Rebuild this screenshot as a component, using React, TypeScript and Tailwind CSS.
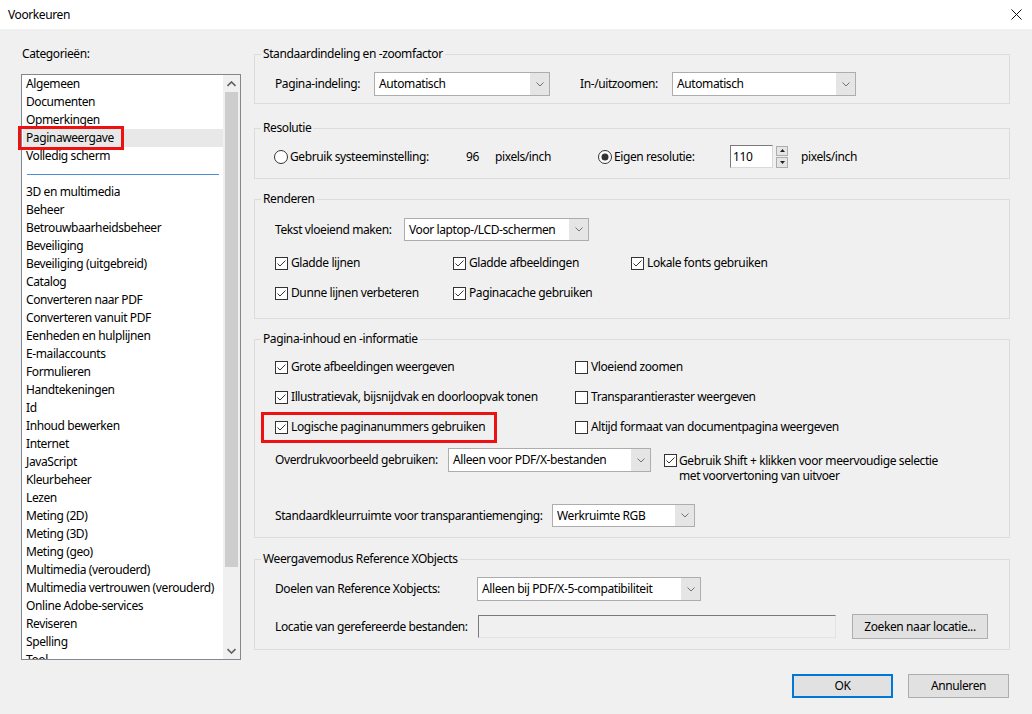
import React from 'react'

const FONT = { fontFamily: '"Noto Sans", "Liberation Sans", sans-serif' }

const categories = [
  'Algemeen',
  'Documenten',
  'Opmerkingen',
  'Paginaweergave',
  'Volledig scherm',
  '-',
  '3D en multimedia',
  'Beheer',
  'Betrouwbaarheidsbeheer',
  'Beveiliging',
  'Beveiliging (uitgebreid)',
  'Catalog',
  'Converteren naar PDF',
  'Converteren vanuit PDF',
  'Eenheden en hulplijnen',
  'E-mailaccounts',
  'Formulieren',
  'Handtekeningen',
  'Id',
  'Inhoud bewerken',
  'Internet',
  'JavaScript',
  'Kleurbeheer',
  'Lezen',
  'Meting (2D)',
  'Meting (3D)',
  'Meting (geo)',
  'Multimedia (verouderd)',
  'Multimedia vertrouwen (verouderd)',
  'Online Adobe-services',
  'Reviseren',
  'Spelling',
  'Tool',
]

const Chevron = () => (
  <svg width="8" height="5" viewBox="0 0 8 5">
    <path d="M0.5 0.5 L4 4 L7.5 0.5" fill="none" stroke="#707070" strokeWidth="1" />
  </svg>
)

const Select = ({ value, className }: { value: string; className: string }) => (
  <div className={`flex border border-[#adadad] bg-white ${className}`}>
    <div className="flex flex-1 items-center whitespace-nowrap pl-[4px]">{value}</div>
    <div className="flex w-[19px] items-center justify-center bg-[#e5e5e5]">
      <Chevron />
    </div>
  </div>
)

const Checkbox = ({ checked }: { checked: boolean }) => (
  <svg width="13" height="13" viewBox="0 0 13 13" className="shrink-0">
    <rect x="0.5" y="0.5" width="12" height="12" fill="#fff" stroke="#333" />
    {checked && <path d="M2.5 6.5 L5 9 L10.5 3.5" fill="none" stroke="#333" strokeWidth="1" />}
  </svg>
)

const Check = ({ label, checked, className = '' }: { label: string; checked: boolean; className?: string }) => (
  <div className={`flex h-[16px] items-center gap-[3px] ${className}`}>
    <Checkbox checked={checked} />
    <span className="whitespace-nowrap">{label}</span>
  </div>
)

const Radio = ({ checked }: { checked: boolean }) => (
  <svg width="14" height="14" viewBox="0 0 14 14" className="shrink-0">
    <circle cx="7" cy="7" r="6.5" fill="#fff" stroke="#333" />
    {checked && <circle cx="7" cy="7" r="3.5" fill="#333" />}
  </svg>
)

const Group = ({
  title,
  className,
  children,
}: {
  title: string
  className: string
  children: React.ReactNode
}) => (
  <fieldset className={`border border-[#dcdcdc] pl-[6px] pr-2 ${className}`}>
    <legend className="px-[2px] leading-[16px]">{title}</legend>
    <div className="pl-[14px]">{children}</div>
  </fieldset>
)

const Button = ({ label, primary, className = '' }: { label: string; primary?: boolean; className?: string }) => (
  <div
    className={`flex items-center justify-center whitespace-nowrap bg-[#e1e1e1] ${
      primary ? 'border-2 border-[#0078d7]' : 'border border-[#adadad]'
    } ${className}`}
  >
    {label}
  </div>
)

const App = () => {
  return (
    <div
      style={FONT}
      className="flex h-[714px] w-[1032px] flex-col bg-[#f0f0f0] text-[12px] leading-[16px] tracking-[-0.4px] text-black"
    >
      <div className="flex h-[29px] items-center justify-between bg-white pl-[8px] pr-[10px]">
        <span>Voorkeuren</span>
        <svg width="11" height="11" viewBox="0 0 11 11">
          <path d="M0.5 0.5 L10.5 10.5 M10.5 0.5 L0.5 10.5" stroke="#111" strokeWidth="1" />
        </svg>
      </div>

      <div className="flex">
        <div className="w-[241px] pl-[21px]">
          <div className="mt-[17px] mb-[12px] pl-[1px]">Categorieën:</div>
          <div className="flex h-[586px] w-[220px] border border-[#828790] bg-white">
            <div className="flex-1 overflow-y-clip pl-[1px]">
              {categories.map((c) =>
                c === '-' ? (
                  <div key="sep" className="flex h-[18px] items-center pl-[4px] pr-[4px]">
                    <div className="h-px w-full bg-[#4a90d9]" />
                  </div>
                ) : (
                  <div
                    key={c}
                    className={`h-[18px] whitespace-nowrap pl-[3px] leading-[18px] ${
                      c === 'Paginaweergave' ? 'bg-[#e8e8e8]' : ''
                    }`}
                  >
                    {c === 'Paginaweergave' ? (
                      <span className="relative inline-block h-[18px]">
                        {c}
                        <span className="absolute -top-[3px] -bottom-[3px] -left-[8px] -right-[10px] border-[3px] border-[#ee1111]" />
                      </span>
                    ) : (
                      c
                    )}
                  </div>
                ),
              )}
            </div>
            <div className="flex w-[17px] shrink-0 flex-col bg-[#f0f0f0]">
              <div className="flex h-[17px] items-center justify-center">
                <svg width="9" height="6" viewBox="0 0 9 6">
                  <path d="M0.5 5 L4.5 1 L8.5 5" fill="none" stroke="#606060" strokeWidth="1.6" />
                </svg>
              </div>
              <div className="flex-1 px-[2px]">
                <div className="h-[475px] bg-[#cdcdcd]" />
              </div>
              <div className="flex h-[17px] items-center justify-center">
                <svg width="9" height="6" viewBox="0 0 9 6">
                  <path d="M0.5 1 L4.5 5 L8.5 1" fill="none" stroke="#606060" strokeWidth="1.6" />
                </svg>
              </div>
            </div>
          </div>
        </div>

        <div className="ml-[13px] w-[756px]">
          <Group title="Standaardindeling en -zoomfactor" className="mt-[17px] pt-[10px] pb-[7px]">
            <div className="flex h-[24px] items-center whitespace-nowrap">
              <span className="w-[99px]">Pagina-indeling:</span>
              <Select value="Automatisch" className="h-[24px] w-[176px]" />
              <span className="ml-[30px] w-[92px]">In-/uitzoomen:</span>
              <Select value="Automatisch" className="h-[24px] w-[184px]" />
            </div>
          </Group>

          <Group title="Resolutie" className="mt-[16px] pt-[9px] pb-[10px]">
            <div className="-ml-[1px] flex h-[23px] items-center whitespace-nowrap">
              <div className="flex w-[192px] items-center gap-[2px]">
                <Radio checked={false} />
                <span>Gebruik systeeminstelling:</span>
              </div>
              <span className="w-[29px]">96</span>
              <span className="w-[103px]">pixels/inch</span>
              <div className="flex w-[132px] items-center gap-[2px]">
                <Radio checked />
                <span>Eigen resolutie:</span>
              </div>
              <div className="flex h-[23px] w-[43px] items-center border border-t-[#7a7a7a] border-l-[#7a7a7a] border-r-[#d9d9d9] border-b-[#d9d9d9] bg-white pl-[2px]">
                110
              </div>
              <div className="ml-[3px] flex h-[22px] w-[12px] flex-col gap-px">
                <div className="flex flex-1 items-center justify-center border border-[#adadad] bg-[#e5e5e5]">
                  <svg width="5" height="3" viewBox="0 0 5 3">
                    <path d="M0 3 L2.5 0 L5 3 Z" fill="#222" />
                  </svg>
                </div>
                <div className="flex flex-1 items-center justify-center border border-[#adadad] bg-[#e5e5e5]">
                  <svg width="5" height="3" viewBox="0 0 5 3">
                    <path d="M0 0 L2.5 3 L5 0 Z" fill="#222" />
                  </svg>
                </div>
              </div>
              <span className="ml-[13px]">pixels/inch</span>
            </div>
          </Group>

          <Group title="Renderen" className="mt-[12px] pt-[11px] pb-[17px]">
            <div className="flex h-[23px] items-center whitespace-nowrap">
              <span className="w-[129px]">Tekst vloeiend maken:</span>
              <Select value="Voor laptop-/LCD-schermen" className="h-[23px] w-[185px]" />
            </div>
            <div className="mt-[14px] flex">
              <Check label="Gladde lijnen" checked className="w-[178px]" />
              <Check label="Gladde afbeeldingen" checked className="w-[178px]" />
              <Check label="Lokale fonts gebruiken" checked />
            </div>
            <div className="mt-[14px] flex">
              <Check label="Dunne lijnen verbeteren" checked className="w-[178px]" />
              <Check label="Paginacache gebruiken" checked />
            </div>
          </Group>

          <Group title="Pagina-inhoud en -informatie" className="mt-[12px] pt-[12px] pb-[10px]">
            <div className="flex">
              <Check label="Grote afbeeldingen weergeven" checked className="w-[300px]" />
              <Check label="Vloeiend zoomen" checked={false} />
            </div>
            <div className="mt-[14px] flex">
              <Check label="Illustratievak, bijsnijdvak en doorloopvak tonen" checked className="w-[300px]" />
              <Check label="Transparantieraster weergeven" checked={false} />
            </div>
            <div className="mt-[14px] flex">
              <div className="relative w-[300px]">
                <Check label="Logische paginanummers gebruiken" checked />
                <span className="absolute -top-[7px] -bottom-[8px] -left-[14px] w-[236px] border-[3px] border-[#ee1111]" />
              </div>
              <Check label="Altijd formaat van documentpagina weergeven" checked={false} />
            </div>
            <div className="mt-[13px] flex items-start whitespace-nowrap">
              <span className="flex h-[24px] w-[173px] items-center">Overdrukvoorbeeld gebruiken:</span>
              <Select value="Alleen voor PDF/X-bestanden" className="h-[24px] w-[203px]" />
              <div className="ml-[13px] mt-[5px] flex items-start gap-[2px]">
                <div className="mt-px">
                  <Checkbox checked />
                </div>
                <span className="leading-[15px]">
                  Gebruik Shift + klikken voor meervoudige selectie
                  <br />
                  met voorvertoning van uitvoer
                </span>
              </div>
            </div>
            <div className="mt-[21px] flex h-[23px] items-center whitespace-nowrap">
              <span className="w-[277px]">Standaardkleurruimte voor transparantiemenging:</span>
              <Select value="Werkruimte RGB" className="h-[23px] w-[143px]" />
            </div>
          </Group>

          <Group title="Weergavemodus Reference XObjects" className="mt-[13px] pt-[10px] pb-[10px]">
            <div className="flex h-[24px] items-center whitespace-nowrap">
              <span className="w-[202px]">Doelen van Reference Xobjects:</span>
              <Select value="Alleen bij PDF/X-5-compatibiliteit" className="h-[24px] w-[224px]" />
            </div>
            <div className="mt-[13px] flex h-[25px] items-center whitespace-nowrap">
              <span className="w-[203px]">Locatie van gerefereerde bestanden:</span>
              <div className="h-[23px] w-[358px] border border-t-[#7a7a7a] border-l-[#7a7a7a] border-r-[#e3e3e3] border-b-[#e3e3e3] bg-[#f0f0f0]" />
              <Button label="Zoeken naar locatie..." className="ml-[16px] h-[25px] w-[136px]" />
            </div>
          </Group>
        </div>
      </div>

      <div className="mt-[14px] flex justify-end gap-[15px] pr-[23px]">
        <Button label="OK" primary className="h-[24px] w-[101px]" />
        <Button label="Annuleren" className="h-[24px] w-[101px]" />
      </div>
    </div>
  )
}

export default App
